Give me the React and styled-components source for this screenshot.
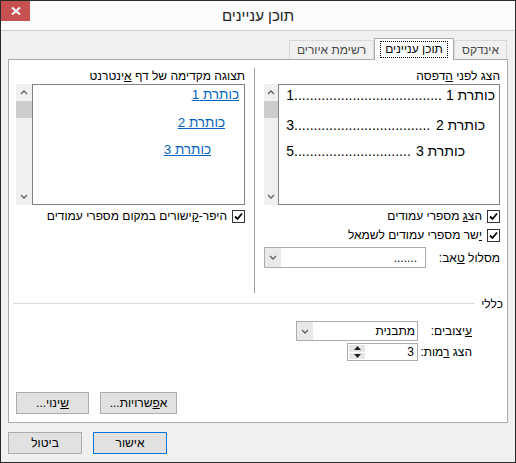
import React from 'react';
import styled, { createGlobalStyle } from 'styled-components';

const GlobalStyle = createGlobalStyle`
  html, body {
    margin: 0;
    padding: 0;
    background: #ffffff;
  }
  body {
    font-family: "Liberation Sans", "DejaVu Sans", sans-serif;
    font-size: 12px;
    color: #000;
  }
  * {
    box-sizing: border-box;
  }
`;

const Window = styled.div`
  width: 516px;
  height: 463px;
  border: 1px solid #2a2a2a;
  background: #f0f0f0;
  display: flex;
  flex-direction: column;
`;

const TitleBar = styled.div`
  height: 30px;
  background: #fcfcfc;
  border-bottom: 1px solid #cfcfcf;
  display: grid;
  grid-template-columns: 29px 1fr 29px;
  align-items: start;
`;

const CloseButton = styled.div`
  width: 29px;
  height: 20px;
  background: #c75050;
  display: flex;
  align-items: center;
  justify-content: center;
`;

const Title = styled.div`
  height: 29px;
  line-height: 29px;
  text-align: center;
  font-size: 15px;
  color: #222;
  direction: rtl;
`;

const Body = styled.div`
  flex: 1;
  direction: rtl;
  padding: 7px 7px 8px 7px;
  display: flex;
  flex-direction: column;
`;

const TabRow = styled.div`
  height: 21px;
  display: flex;
  align-items: flex-end;
  padding-right: 1px;
`;

const Tab = styled.div`
  position: relative;
  height: ${p => (p.active ? '22px' : '19px')};
  width: ${p => p.w}px;
  margin-bottom: ${p => (p.active ? '-1px' : '0')};
  z-index: ${p => (p.active ? 1 : 0)};
  background: ${p => (p.active ? '#ffffff' : '#f0f0f0')};
  border: 1px solid ${p => (p.active ? '#acacac' : '#d9d9d9')};
  border-bottom: none;
  color: ${p => (p.active ? '#000' : '#4a4a4a')};
  display: flex;
  align-items: center;
  justify-content: center;
  font-size: 12px;
`;

const FocusRect = styled.span`
  border: 1px dotted #000;
  padding: 1px 4px 1px 4px;
  line-height: 13px;
`;

const Panel = styled.div`
  height: 364px;
  background: #ffffff;
  border: 1px solid #acacac;
  padding: 8px 7px 8px 7px;
  display: flex;
  flex-direction: column;
`;

const Columns = styled.div`
  height: 225px;
  display: grid;
  grid-template-columns: 236px 1px 1fr;
  column-gap: 9px;
`;

const Column = styled.div`
  display: flex;
  flex-direction: column;
`;

const Separator = styled.div`
  background: #a0a0a0;
  width: 1px;
`;

const Label = styled.div`
  height: 16px;
  line-height: 16px;
  white-space: nowrap;
`;

const ListRow = styled.div`
  height: 121px;
  display: flex;
`;

const PreviewBox = styled.div`
  flex: 1;
  border: 1px solid #828282;
  background: #fff;
  padding: 0 ${p => p.pr}px 0 7px;
`;

const Scrollbar = styled.div`
  width: 16px;
  background: #f0f0f0;
  display: flex;
  flex-direction: column;
`;

const ScrollArrow = styled.div`
  height: 17px;
  display: flex;
  align-items: center;
  justify-content: center;
`;

const ScrollThumb = styled.div`
  height: 17px;
  background: #cdcdcd;
`;

const ScrollTrack = styled.div`
  flex: 1;
`;

const TocLine = styled.div`
  display: flex;
  align-items: baseline;
  height: 18px;
  line-height: 18px;
  font-size: 14px;
  margin-top: ${p => p.mt}px;
  padding-right: ${p => p.indent}px;
  white-space: nowrap;
`;

const Dots = styled.span`
  flex: 1;
  text-align: left;
  white-space: nowrap;
  margin-right: 4px;
`;

const LinkLine = styled.div`
  height: 18px;
  line-height: 18px;
  font-size: 13.5px;
  margin-top: ${p => p.mt}px;
  padding-right: ${p => p.indent}px;
  color: #0563c1;
  text-decoration: underline;
  white-space: nowrap;
`;

const CheckRow = styled.label`
  height: 16px;
  margin-top: 3px;
  display: flex;
  align-items: center;
  gap: 5px;
  white-space: nowrap;
`;

const CheckBox = styled.span`
  width: 13px;
  height: 13px;
  border: 1px solid #333;
  background: #fff;
  display: flex;
  align-items: center;
  justify-content: center;
  flex: none;
`;

const FieldRow = styled.div`
  height: 21px;
  margin-top: ${p => p.mt}px;
  display: flex;
  align-items: center;
  justify-content: space-between;
`;

const FormRow = styled.div`
  height: ${p => p.h}px;
  margin-top: ${p => p.mt}px;
  display: flex;
  align-items: center;
  padding-right: 28px;
`;

const FormLabel = styled.div`
  width: 54px;
  white-space: nowrap;
`;

const Select = styled.div`
  width: ${p => p.w}px;
  height: ${p => p.h}px;
  border: 1px solid #acacac;
  background: #fff;
  display: flex;
  align-items: stretch;
`;

const SelectValue = styled.div`
  flex: 1;
  padding-right: ${p => p.pr}px;
  display: flex;
  align-items: center;
`;

const DropButton = styled.div`
  width: 16px;
  background: #e9e9e9;
  display: flex;
  align-items: center;
  justify-content: center;
`;

const SpinButtons = styled.div`
  width: 16px;
  margin: 1px;
  display: flex;
  flex-direction: column;
  gap: 1px;
`;

const SpinHalf = styled.div`
  flex: 1;
  background: #e6e6e6;
  display: flex;
  align-items: center;
  justify-content: center;
`;

const Legend = styled.div`
  height: 15px;
  margin-top: 3px;
  margin-right: -3px;
  display: flex;
  align-items: center;
  gap: 6px;
`;

const LegendLine = styled.div`
  flex: 1;
  height: 1px;
  background: #dcdcdc;
  margin-left: -3px;
`;

const ButtonRow = styled.div`
  margin-top: auto;
  display: flex;
  justify-content: flex-end;
  gap: 11px;
`;

const Button = styled.div`
  width: ${p => p.w}px;
  height: 22px;
  background: #e1e1e1;
  border: 1px solid ${p => (p.primary ? '#0078d7' : '#adadad')};
  display: flex;
  align-items: center;
  justify-content: center;
  white-space: nowrap;
`;

const DialogButtons = styled.div`
  margin-top: 9px;
  display: flex;
  justify-content: flex-end;
  gap: 11px;
`;

const Check = () => (
  <svg width="9" height="9" viewBox="0 0 9 9">
    <path d="M1 4.5 L3.5 7 L8 1.5" fill="none" stroke="#000" strokeWidth="1.8" />
  </svg>
);

const Chevron = ({ up }) => (
  <svg width="8" height="5" viewBox="0 0 8 5">
    <path
      d={up ? 'M1 4 L4 1 L7 4' : 'M1 1 L4 4 L7 1'}
      fill="none"
      stroke="#606060"
      strokeWidth="1.3"
    />
  </svg>
);

const Triangle = ({ up }) => (
  <svg width="7" height="4" viewBox="0 0 7 4">
    <path d={up ? 'M0 4 L3.5 0 L7 4 Z' : 'M0 0 L3.5 4 L7 0 Z'} fill="#222" />
  </svg>
);

const ListScroll = () => (
  <Scrollbar>
    <ScrollArrow>
      <Chevron up />
    </ScrollArrow>
    <ScrollThumb />
    <ScrollTrack />
    <ScrollArrow>
      <Chevron />
    </ScrollArrow>
  </Scrollbar>
);

const tocLines = [
  { text: 'כותרת 1', page: '1', indent: 0, mt: 1, dots: 38 },
  { text: 'כותרת 2', page: '3', indent: 10, mt: 12, dots: 35 },
  { text: 'כותרת 3', page: '5', indent: 30, mt: 8, dots: 30 },
];

const linkLines = [
  { text: 'כותרת 1', indent: 0, mt: 1 },
  { text: 'כותרת 2', indent: 14, mt: 10 },
  { text: 'כותרת 3', indent: 28, mt: 9 },
];

export default function App() {
  return (
    <>
      <GlobalStyle />
      <Window>
        <TitleBar>
          <CloseButton>
            <svg width="10" height="8" viewBox="0 0 10 8">
              <path d="M1 0.5 L9 7.5 M9 0.5 L1 7.5" stroke="#fff" strokeWidth="2" />
            </svg>
          </CloseButton>
          <Title>תוכן עניינים</Title>
          <div />
        </TitleBar>

        <Body>
          <TabRow>
            <Tab w={53}>אינדקס</Tab>
            <Tab w={80} active>
              <FocusRect>תוכן עניינים</FocusRect>
            </Tab>
            <Tab w={85}>רשימת איורים</Tab>
          </TabRow>

          <Panel>
            <Columns>
              <Column>
                <Label>
                  הצג לפני <u>ה</u>דפסה
                </Label>
                <ListRow>
                  <PreviewBox pr={4}>
                    {tocLines.map(l => (
                      <TocLine key={l.page} mt={l.mt} indent={l.indent}>
                        <span>{l.text}</span>
                        <Dots>{'.'.repeat(l.dots)}</Dots>
                        <span>{l.page}</span>
                      </TocLine>
                    ))}
                  </PreviewBox>
                  <ListScroll />
                </ListRow>
                <CheckRow>
                  <CheckBox>
                    <Check />
                  </CheckBox>
                  <span>
                    הצ<u>ג</u> מספרי עמודים
                  </span>
                </CheckRow>
                <CheckRow>
                  <CheckBox>
                    <Check />
                  </CheckBox>
                  <span>
                    <u>י</u>שר מספרי עמודים לשמאל
                  </span>
                </CheckRow>
                <FieldRow mt={4}>
                  <span>
                    מסלול <u>ט</u>אב:
                  </span>
                  <Select w={162} h={21}>
                    <SelectValue pr={8}>.......</SelectValue>
                    <DropButton>
                      <Chevron />
                    </DropButton>
                  </Select>
                </FieldRow>
              </Column>

              <Separator />

              <Column>
                <Label>
                  תצוגה מקדימה של דף <u>א</u>ינטרנט
                </Label>
                <ListRow>
                  <PreviewBox pr={5}>
                    {linkLines.map(l => (
                      <LinkLine key={l.text} mt={l.mt} indent={l.indent}>
                        {l.text}
                      </LinkLine>
                    ))}
                  </PreviewBox>
                  <ListScroll />
                </ListRow>
                <CheckRow>
                  <CheckBox>
                    <Check />
                  </CheckBox>
                  <span>
                    היפר-<u>ק</u>ישורים במקום מספרי עמודים
                  </span>
                </CheckRow>
              </Column>
            </Columns>

            <Legend>
              <span>כללי</span>
              <LegendLine />
            </Legend>

            <FormRow h={20} mt={10}>
              <FormLabel>
                <u>ע</u>יצובים:
              </FormLabel>
              <Select w={122} h={20}>
                <SelectValue pr={2}>מתבנית</SelectValue>
                <DropButton>
                  <Chevron />
                </DropButton>
              </Select>
            </FormRow>

            <FormRow h={18} mt={2}>
              <FormLabel>
                הצג <u>ר</u>מות:
              </FormLabel>
              <Select w={71} h={18}>
                <SelectValue pr={3}>3</SelectValue>
                <SpinButtons>
                  <SpinHalf>
                    <Triangle up />
                  </SpinHalf>
                  <SpinHalf>
                    <Triangle />
                  </SpinHalf>
                </SpinButtons>
              </Select>
            </FormRow>

            <ButtonRow>
              <Button w={77}>
                א<u>פ</u>שרויות...
              </Button>
              <Button w={73}>
                <u>ש</u>ינוי...
              </Button>
            </ButtonRow>
          </Panel>

          <DialogButtons>
            <Button w={74} primary>
              אישור
            </Button>
            <Button w={74}>ביטול</Button>
          </DialogButtons>
        </Body>
      </Window>
    </>
  );
}
